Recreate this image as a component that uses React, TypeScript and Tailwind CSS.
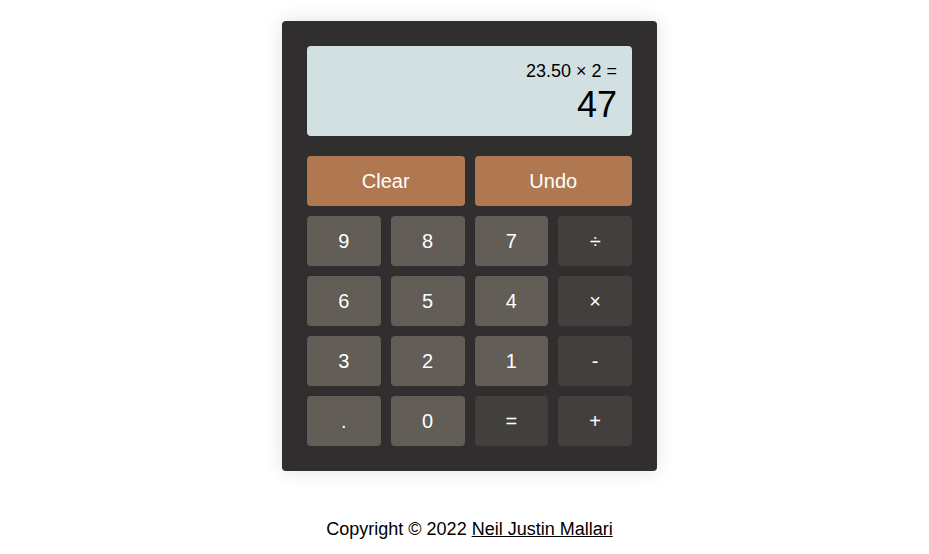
const numBtn = 'flex h-[50px] items-center justify-center rounded bg-[#625d57] text-[20px] text-white'
const opBtn = 'flex h-[50px] items-center justify-center rounded bg-[#423f3c] text-[20px] text-white'

const keys: [string, boolean][] = [
  ['9', false], ['8', false], ['7', false], ['÷', true],
  ['6', false], ['5', false], ['4', false], ['×', true],
  ['3', false], ['2', false], ['1', false], ['-', true],
  ['.', false], ['0', false], ['=', true], ['+', true],
]

export default function App() {
  return (
    <div className="flex min-h-[554px] flex-col items-center bg-white pl-[10px] font-['Liberation_Sans',Arial,sans-serif] text-black">
      <div className="mt-[21px] flex w-[375px] flex-col gap-[10px] rounded bg-[#302e2e] p-[25px] shadow-[0_0_20px_rgba(0,0,0,0.12)]">
        <div className="mb-[10px] flex h-[90px] flex-col items-end rounded bg-[#d3e0e1] px-[15px] pt-[14px]">
          <div className="text-[18px] leading-[22px]">23.50 × 2 =</div>
          <div className="text-[36px] leading-[46px]">47</div>
        </div>
        <div className="grid grid-cols-2 gap-[10px]">
          <button type="button" className="h-[50px] rounded bg-[#b07851] text-[20px] text-white">Clear</button>
          <button type="button" className="h-[50px] rounded bg-[#b07851] text-[20px] text-white">Undo</button>
        </div>
        <div className="grid grid-cols-4 gap-[10px]">
          {keys.map(([k, op]) => (
            <button key={k} type="button" className={op ? opBtn : numBtn}>
              {k}
            </button>
          ))}
        </div>
      </div>
      <p className="mt-[45px] text-[18px]">
        Copyright © 2022{' '}
        <a href="#" className="text-black underline">Neil Justin Mallari</a>
      </p>
    </div>
  )
}
